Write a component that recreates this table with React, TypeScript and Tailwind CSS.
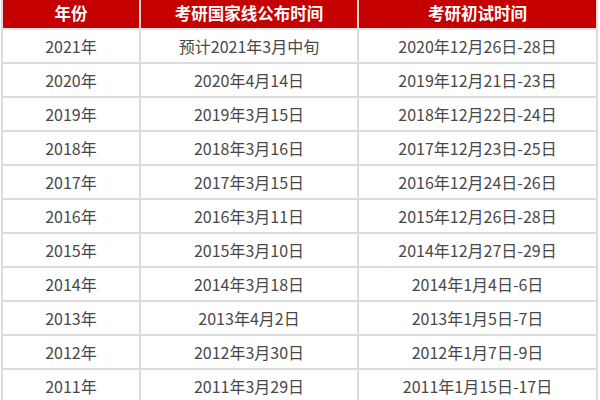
const rows: [string, string, string][] = [
  ["2021年", "预计2021年3月中旬", "2020年12月26日-28日"],
  ["2020年", "2020年4月14日", "2019年12月21日-23日"],
  ["2019年", "2019年3月15日", "2018年12月22日-24日"],
  ["2018年", "2018年3月16日", "2017年12月23日-25日"],
  ["2017年", "2017年3月15日", "2016年12月24日-26日"],
  ["2016年", "2016年3月11日", "2015年12月26日-28日"],
  ["2015年", "2015年3月10日", "2014年12月27日-29日"],
  ["2014年", "2014年3月18日", "2014年1月4日-6日"],
  ["2013年", "2013年4月2日", "2013年1月5日-7日"],
  ["2012年", "2012年3月30日", "2012年1月7日-9日"],
  ["2011年", "2011年3月29日", "2011年1月15日-17日"],
];

const headers = ["年份", "考研国家线公布时间", "考研初试时间"];

export default function App() {
  return (
    <div
      className="w-[600px] h-[400px] overflow-hidden bg-white pl-[1px]"
      style={{ fontFamily: '"Noto Sans CJK SC", "Noto Sans", sans-serif' }}
    >
      <div className="grid grid-cols-[138px_218px_239px] border-l-2 border-[#dcdcdc] w-fit">
        {headers.map((h) => (
          <div
            key={h}
            className="h-[30px] flex items-center justify-center bg-[#c40000] text-white text-[16.5px] font-bold border-r-2 border-b-2 border-r-[#f3d6d6] border-b-[#e6e6e6] pb-[2px]"
          >
            {h}
          </div>
        ))}
        {rows.map((r) =>
          r.map((c, i) => (
            <div
              key={r[0] + i}
              className="h-[34px] flex items-center justify-center text-[#484848] text-[16px] border-r-2 border-b-2 border-[#dcdcdc]"
            >
              {c}
            </div>
          ))
        )}
      </div>
    </div>
  );
}
